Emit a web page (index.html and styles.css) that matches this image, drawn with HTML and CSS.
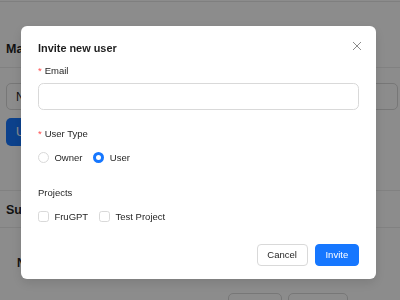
FILE: index.html
```html
<!DOCTYPE html>
<html lang="en">
<head>
  <meta charset="UTF-8" />
  <meta name="viewport" content="width=device-width, initial-scale=1.0"/>
  <title>Users</title>
  <link rel="stylesheet" href="styles.css">
</head>
<body>
  <div class="page">
    <div class="topbar"></div>
    <h3 class="page-title">Manage Users</h3>
    <div class="filter">
      <input class="page-input" type="text" value="Name">
      <button class="page-btn">Update</button>
    </div>
    <div class="section-head">Subscription</div>
    <div class="sub-row">Name</div>
    <div class="page-actions">
      <span class="ghost-btn"></span>
      <span class="ghost-btn wide"></span>
    </div>
  </div>

  <div class="mask"></div>
  <div class="modal-wrap">
    <div class="modal" role="dialog">
      <button class="modal-close" aria-label="Close">
        <svg viewBox="0 0 10 10" width="10" height="10"><path d="M1 1 L9 9 M9 1 L1 9" stroke="currentColor" stroke-width="1" fill="none"/></svg>
      </button>
      <div class="modal-title">Invite new user</div>

      <div class="form-item">
        <label class="form-label required">Email</label>
        <input class="input" type="email">
      </div>

      <div class="form-item">
        <label class="form-label required">User Type</label>
        <div class="choice-row">
          <label class="choice"><span class="radio"></span>Owner</label>
          <label class="choice"><span class="radio checked"></span>User</label>
        </div>
      </div>

      <div class="form-item">
        <label class="form-label">Projects</label>
        <div class="choice-row">
          <label class="choice"><span class="checkbox"></span>FruGPT</label>
          <label class="choice"><span class="checkbox"></span>Test Project</label>
        </div>
      </div>

      <div class="modal-footer">
        <button class="btn">Cancel</button>
        <button class="btn btn-primary">Invite</button>
      </div>
    </div>
  </div>
</body>
</html>
```

FILE: styles.css
```css
* { box-sizing: border-box; }
body { margin: 0; width: 400px; height: 300px; overflow: hidden; background: #fff; font-family: "Liberation Sans", Arial, sans-serif; font-size: 9.5px; color: #1f1f1f; }

/* page behind the dialog */
.topbar { height: 2px; border-bottom: 1px solid #e8e8e8; }
.page-title { margin: 0; padding: 38px 6px 0; height: 66px; font-size: 12.5px; line-height: 18px; border-bottom: 1px solid #ececec; }
.filter { padding: 15px 0 0 6px; }
.page-input { display: block; width: 392px; height: 27px; border: 1px solid #d9d9d9; border-radius: 5px; padding: 0 9px; font: inherit; font-size: 12px; color: #1f1f1f; }
.page-btn { display: block; margin-top: 8px; height: 28px; padding: 0 10px; border: none; border-radius: 5px; background: #1677ff; color: #fff; font: inherit; font-size: 12px; }
.section-head { margin-top: 44px; padding: 10px 6px 0; height: 38px; border-top: 1px solid #ececec; border-bottom: 1px solid #ececec; font-size: 12.5px; font-weight: 700; line-height: 18px; }
.sub-row { padding: 28px 17px 0; height: 65px; font-size: 12px; font-weight: 700; }
.page-actions { display: flex; gap: 6px; padding-left: 228px; }
.ghost-btn { width: 54px; height: 24px; border: 1px solid #d9d9d9; border-radius: 5px; background: #fff; }
.ghost-btn.wide { width: 60px; }

/* dialog */
.mask { position: fixed; inset: 0; background: rgba(0, 0, 0, 0.45); }
.modal-wrap { position: fixed; inset: 0; }
.modal { position: relative; width: 355px; margin: 26px 0 0 21px; padding: 13.6px 17px 13.6px; background: #fff; border-radius: 6px; box-shadow: 0 4px 12px rgba(0, 0, 0, 0.12); }
.modal-close { position: absolute; top: 12px; right: 12px; width: 15px; height: 15px; padding: 0; border: none; background: none; color: rgba(0, 0, 0, 0.45); display: flex; align-items: center; justify-content: center; }
.modal-title { font-size: 10.9px; font-weight: 700; line-height: 16px; margin-bottom: 7px; color: #1f1f1f; }

.form-item { margin-bottom: 16.3px; }
.form-label { display: block; line-height: 15px; padding-bottom: 5.4px; color: #1f1f1f; }
.form-label.required::before { content: "*"; color: #ff4d4f; margin-right: 3px; }
.input { display: block; width: 100%; height: 27px; border: 1px solid #d9d9d9; border-radius: 5.4px; font: inherit; }

.choice-row { display: flex; align-items: center; height: 22px; }
.choice { display: inline-flex; align-items: center; margin-right: 11px; }
.radio, .checkbox { width: 11px; height: 11px; margin-right: 5.4px; border: 1px solid #d9d9d9; background: #fff; }
.radio { border-radius: 50%; }
.radio.checked { border: 3.5px solid #1677ff; }
.checkbox { border-radius: 2.7px; }

.modal-footer { display: flex; justify-content: flex-end; gap: 7px; }
.btn { height: 22px; padding: 0 9.8px; border: 1px solid #d9d9d9; border-radius: 4px; background: #fff; font: inherit; color: #1f1f1f; }
.btn-primary { background: #1677ff; border-color: #1677ff; color: #fff; }
```
